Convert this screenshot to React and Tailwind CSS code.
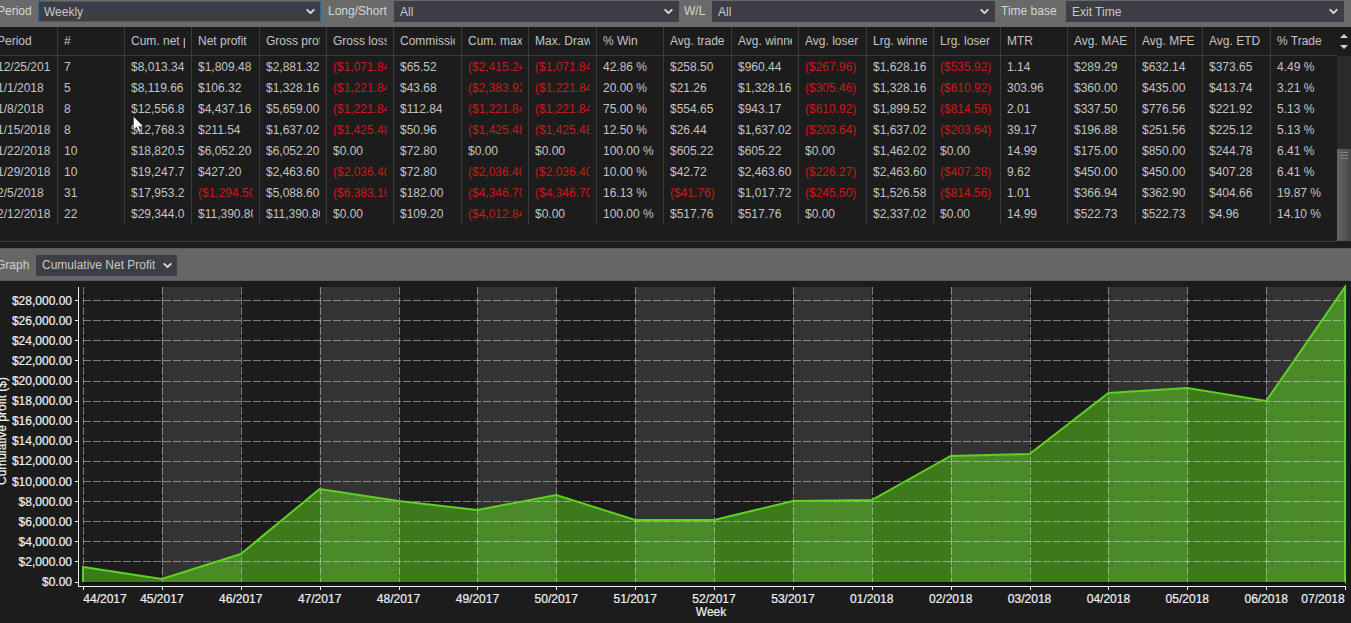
import { ChevronDown } from 'lucide-react';

const columns = ['Period', '#', 'Cum. net profit', 'Net profit', 'Gross profit', 'Gross loss', 'Commission', 'Cum. max', 'Max. Drawdown', '% Win', 'Avg. trade', 'Avg. winner', 'Avg. loser', 'Lrg. winner', 'Lrg. loser', 'MTR', 'Avg. MAE', 'Avg. MFE', 'Avg. ETD', '% Trade'];

const rows = [
  ['12/25/2017', '7', '$8,013.34', '$1,809.48', '$2,881.32', '($1,071.84)', '$65.52', '($2,415.24)', '($1,071.84)', '42.86 %', '$258.50', '$960.44', '($267.96)', '$1,628.16', '($535.92)', '1.14', '$289.29', '$632.14', '$373.65', '4.49 %'],
  ['1/1/2018', '5', '$8,119.66', '$106.32', '$1,328.16', '($1,221.84)', '$43.68', '($2,383.92)', '($1,221.84)', '20.00 %', '$21.26', '$1,328.16', '($305.46)', '$1,328.16', '($610.92)', '303.96', '$360.00', '$435.00', '$413.74', '3.21 %'],
  ['1/8/2018', '8', '$12,556.82', '$4,437.16', '$5,659.00', '($1,221.84)', '$112.84', '($1,221.84)', '($1,221.84)', '75.00 %', '$554.65', '$943.17', '($610.92)', '$1,899.52', '($814.56)', '2.01', '$337.50', '$776.56', '$221.92', '5.13 %'],
  ['1/15/2018', '8', '$12,768.36', '$211.54', '$1,637.02', '($1,425.48)', '$50.96', '($1,425.48)', '($1,425.48)', '12.50 %', '$26.44', '$1,637.02', '($203.64)', '$1,637.02', '($203.64)', '39.17', '$196.88', '$251.56', '$225.12', '5.13 %'],
  ['1/22/2018', '10', '$18,820.56', '$6,052.20', '$6,052.20', '$0.00', '$72.80', '$0.00', '$0.00', '100.00 %', '$605.22', '$605.22', '$0.00', '$1,462.02', '$0.00', '14.99', '$175.00', '$850.00', '$244.78', '6.41 %'],
  ['1/29/2018', '10', '$19,247.76', '$427.20', '$2,463.60', '($2,036.40)', '$72.80', '($2,036.40)', '($2,036.40)', '10.00 %', '$42.72', '$2,463.60', '($226.27)', '$2,463.60', '($407.28)', '9.62', '$450.00', '$450.00', '$407.28', '6.41 %'],
  ['2/5/2018', '31', '$17,953.26', '($1,294.50)', '$5,088.60', '($6,383.10)', '$182.00', '($4,346.70)', '($4,346.70)', '16.13 %', '($41.76)', '$1,017.72', '($245.50)', '$1,526.58', '($814.56)', '1.01', '$366.94', '$362.90', '$404.66', '19.87 %'],
  ['2/12/2018', '22', '$29,344.06', '$11,390.80', '$11,390.80', '$0.00', '$109.20', '($4,012.84)', '$0.00', '100.00 %', '$517.76', '$517.76', '$0.00', '$2,337.02', '$0.00', '14.99', '$522.73', '$522.73', '$4.96', '14.10 %'],
];

const gridCols = 'grid grid-cols-[57px_67px_67px_68px_67px_67px_68px_67px_68px_67px_68px_67px_68px_67px_67px_67px_68px_67px_68px_67px]';

const weeks = ['44/2017', '45/2017', '46/2017', '47/2017', '48/2017', '49/2017', '50/2017', '51/2017', '52/2017', '53/2017', '01/2018', '02/2018', '03/2018', '04/2018', '05/2018', '06/2018', '07/2018'];
const lineY = [567, 579, 554, 489, 501, 510, 495, 520, 520, 501, 500, 456, 454, 393, 388, 401, 287];
const tickX = weeks.map((_, i) => 83 + i * 78.88);
const yTicks = Array.from({ length: 15 }, (_, i) => i * 2000);
const yPos = (v) => 581.5 - (v / 2000) * 20.1;
const money = (v) => '$' + v.toLocaleString('en-US') + '.00';

function Select({ label, width, active, className = '' }) {
  return (
    <div
      className={`h-[21px] flex items-center justify-between pl-[5px] pr-[3px] bg-[#3d3d45] text-[#c9c9c9] border ${active ? 'border-[#2a6694]' : 'border-[#3d3d45]'} ${width} ${className}`}
    >
      <span>{label}</span>
      <ChevronDown size={13} strokeWidth={3.5} className="text-[#dcdcdc]" />
    </div>
  );
}

function Toolbar() {
  return (
    <div className="h-[27px] flex items-start pt-px bg-[#6a6a6a] text-[12px] text-[#d6d6d6]">
      <span className="w-[39px] -ml-[3px] leading-[21px] shrink-0">Period</span>
      <Select label="Weekly" width="w-[283px] ml-[2px]" active />
      <span className="ml-[7px] w-[66px] leading-[21px]">Long/Short</span>
      <Select label="All" width="w-[285px]" />
      <span className="ml-[5px] w-[28px] leading-[21px]">W/L</span>
      <Select label="All" width="w-[283px]" />
      <span className="ml-[6px] w-[65px] leading-[21px]">Time base</span>
      <Select label="Exit Time" width="w-[278px]" />
    </div>
  );
}

function Scrollbar() {
  return (
    <div className="w-[14px] h-[214px] shrink-0 flex flex-col bg-[#2a2a2a]">
      <div className="h-[29px] bg-[#1c1c1c] flex flex-col items-center justify-center gap-[7px] pr-[1px]">
        <span className="w-0 h-0 border-x-[4px] border-x-transparent border-b-[4px] border-b-[#d0d0d0]" />
        <span className="w-0 h-0 border-x-[4px] border-x-transparent border-t-[4px] border-t-[#d0d0d0]" />
      </div>
      <div className="flex-1 flex flex-col justify-end">
        <div className="h-[92px] bg-gradient-to-r from-[#666666] to-[#484848] flex flex-col items-center gap-[2px] pt-[3px]">
          <span className="w-[8px] h-px bg-[#808080]" />
          <span className="w-[8px] h-px bg-[#808080]" />
          <span className="w-[8px] h-px bg-[#808080]" />
        </div>
      </div>
    </div>
  );
}

// the text is clipped a few pixels short of the next column, as in the grid
function Cell({ value, first, height }) {
  return (
    <div className={`${height} pr-[6px] ${first ? '' : 'pl-[6px] border-l border-[#3c3c3c]'}`}>
      <div className={`overflow-hidden whitespace-nowrap ${value.startsWith('(') ? 'text-[#cc1a1a]' : ''}`}>
        <span className={first ? 'block -ml-[3px]' : 'block'}>{value}</span>
      </div>
    </div>
  );
}

function Table() {
  return (
    <div className="flex h-[214px] text-[12px] text-[#c4c4c4]">
      <div className="w-[1337px] shrink-0">
        <div className={`${gridCols} h-[29px] border-b border-[#3c3c3c] leading-[29px]`}>
          {columns.map((c, i) => (
            <Cell key={c} value={c} first={i === 0} height="h-[28px]" />
          ))}
        </div>
        {rows.map((r) => (
          <div key={r[0]} className={`${gridCols} h-[21px] leading-[22px]`}>
            {r.map((v, i) => (
              <Cell key={i} value={v} first={i === 0} height="h-[21px]" />
            ))}
          </div>
        ))}
      </div>
      <Scrollbar />
    </div>
  );
}

function Chart() {
  const area = `83,582 ${lineY.map((y, i) => `${tickX[i]},${y}`).join(' ')} 1345,582`;
  const line = lineY.map((y, i) => `${tickX[i]},${y}`).join(' ');
  return (
    <svg viewBox="0 281 1351 342" width="1351" height="342" className="block" style={{ fontFamily: '"Liberation Sans", Arial, sans-serif' }}>
      <defs>
        <clipPath id="area-clip">
          <polygon points={area} />
        </clipPath>
      </defs>
      {tickX.slice(0, -1).map((x, i) => i % 2 === 1 && <rect key={x} x={x} y="287" width="78.88" height="297" fill="#333333" />)}
      <polygon points={area} fill="#3c7a1c" />
      <g clipPath="url(#area-clip)">
        {tickX.slice(0, -1).map((x, i) => i % 2 === 1 && <rect key={x} x={x} y="287" width="78.88" height="297" fill="#4b8a28" />)}
      </g>
      <g stroke="#ffffff" strokeOpacity="0.42" strokeDasharray="8 2" shapeRendering="crispEdges">
        {yTicks.map((v) => v > 0 && <line key={v} x1="83" x2="1345" y1={Math.round(yPos(v)) + 0.5} y2={Math.round(yPos(v)) + 0.5} />)}
        {tickX.map((x) => <line key={x} x1={Math.round(x) + 0.5} x2={Math.round(x) + 0.5} y1="287" y2="584" />)}
      </g>
      <rect x="83" y="582" width="1262" height="2" fill="#111111" />
      <polyline points={`83,582 ${line} 1345,582`} fill="none" stroke="#5fd11f" strokeWidth="2" />
      <g stroke="#f0f0f0" shapeRendering="crispEdges">
        <line x1="78.5" x2="78.5" y1="287" y2="587" />
        <line x1="78" x2="1346" y1="586.5" y2="586.5" />
        {yTicks.map((v) => <line key={v} x1="75" x2="78" y1={Math.round(yPos(v)) + 0.5} y2={Math.round(yPos(v)) + 0.5} />)}
        {tickX.map((x) => <line key={x} x1={Math.round(x) + 0.5} x2={Math.round(x) + 0.5} y1="586" y2="590" />)}
      </g>
      <g fill="#eef2f5" fontSize="12" stroke="#eef2f5" strokeWidth="0.2">
        {yTicks.map((v) => <text key={v} x="72" y={yPos(v) + 4.5} textAnchor="end">{money(v)}</text>)}
        {weeks.map((w, i) => <text key={w} x={i === 0 ? 105 : i === 16 ? 1323 : tickX[i]} y="603" textAnchor="middle">{w}</text>)}
        <text x="711" y="616" textAnchor="middle">Week</text>
        <text transform="translate(6 431) rotate(-90)" textAnchor="middle">Cumulative profit ($)</text>
      </g>
    </svg>
  );
}

export default function App() {
  return (
    <div className="relative w-[1351px] h-[623px] overflow-hidden bg-[#1c1c1c] font-['Liberation_Sans',Arial,sans-serif]">
      <Toolbar />
      <Table />
      <div className="h-px bg-[#3c3c3c] w-[1337px]" />
      <div className="h-[33px] mt-[6px] bg-[#666666] border-y border-[#5a5a5a] flex items-center pt-px text-[12px] text-[#d0d0d0]">
        <span className="-ml-[4px] w-[40px]">Graph</span>
        <div className="h-[21px] w-[141px] flex items-center justify-between pl-[6px] pr-[3px] bg-[#3d3d45] text-[#c9c9c9]">
          <span>Cumulative Net Profit</span>
          <ChevronDown size={13} strokeWidth={3.5} className="text-[#dcdcdc]" />
        </div>
      </div>
      <Chart />
      <svg width="11" height="18" viewBox="0 0 11 18" className="absolute left-[133px] top-[116px]">
        <path d="M0.5 0.5 L0.5 14 L3.5 11 L6 16.5 L8 15.5 L5.6 10.4 L10 10 Z" fill="#ffffff" stroke="#222222" strokeWidth="0.4" />
      </svg>
    </div>
  );
}
